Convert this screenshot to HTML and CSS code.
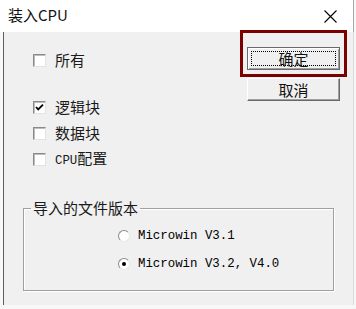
FILE: index.html
```html
<!DOCTYPE html>
<html lang="zh-CN">
<head>
    <meta charset="UTF-8">
    <title>装入CPU</title>
    <link rel="stylesheet" href="styles.css">
</head>
<body>
    <div class="dialog">
        <div class="title-bar">
            <span class="title">装入CPU</span>
            <svg class="close" width="13" height="13" viewBox="0 0 13 13">
                <path d="M0.5 0.5 L12.5 12.5 M12.5 0.5 L0.5 12.5" stroke="#000" stroke-width="1.1" fill="none"/>
            </svg>
        </div>
        <div class="dialog-body">
            <div class="top">
                <div class="checks">
                    <label class="check-row first">
                        <span class="box"></span>
                        <span class="label">所有</span>
                    </label>
                    <label class="check-row">
                        <span class="box">
                            <svg width="11" height="11" viewBox="0 0 11 11">
                                <path d="M2 5 L4.2 7.4 L9 2.6" stroke="#000" stroke-width="1.8" fill="none"/>
                            </svg>
                        </span>
                        <span class="label">逻辑块</span>
                    </label>
                    <label class="check-row">
                        <span class="box"></span>
                        <span class="label">数据块</span>
                    </label>
                    <label class="check-row">
                        <span class="box"></span>
                        <span class="label"><span class="mono">CPU</span>配置</span>
                    </label>
                </div>
                <div class="buttons">
                    <button class="btn default"><span class="focus">确定</span></button>
                    <button class="btn">取消</button>
                </div>
            </div>
            <fieldset class="group">
                <legend>导入的文件版本</legend>
                <label class="radio-row">
                    <span class="radio"></span>
                    <span class="mono">Microwin V3.1</span>
                </label>
                <label class="radio-row">
                    <span class="radio checked"></span>
                    <span class="mono">Microwin V3.2, V4.0</span>
                </label>
            </fieldset>
        </div>
    </div>
    <div class="highlight"></div>
</body>
</html>
```

FILE: styles.css
```css
body {
    margin: 0;
    background-color: #f7f7f7;
    font-family: "Noto Sans CJK SC", "Liberation Sans", sans-serif;
    font-size: 15px;
    color: #000;
    width: 356px;
    height: 309px;
    overflow: hidden;
    position: relative;
}
.dialog {
    width: 354px;
}
.title-bar {
    height: 32px;
    background-color: #fff;
    border-right: 1px solid #a8a8a8;
    display: flex;
    align-items: center;
    justify-content: space-between;
    padding: 0 16px 0 8px;
    box-sizing: border-box;
}
.title {
    font-size: 15px;
    line-height: 20px;
    margin-top: -2px;
    color: #111;
}
.close {
    display: block;
}
.dialog-body {
    margin-left: 3px;
    height: 273px;
    background-color: #f0f0f0;
    border-left: 1px solid #5f5f5f;
    border-right: 1px solid #d9d9d9;
    box-sizing: border-box;
}
.top {
    display: flex;
    justify-content: space-between;
}
.checks {
    padding: 15px 0 0 29px;
    display: flex;
    flex-direction: column;
}
.check-row {
    height: 26px;
    display: flex;
    align-items: center;
}
.check-row.first {
    margin-bottom: 21px;
}
.box {
    width: 13px;
    height: 13px;
    box-sizing: border-box;
    background-color: #fff;
    border: 1px solid;
    border-color: #8a8a8a #e3e3e3 #e3e3e3 #8a8a8a;
    box-shadow: inset 1px 1px #bdbdbd;
    display: flex;
    align-items: center;
    justify-content: center;
}
.box svg {
    display: block;
}
.label {
    margin-left: 9px;
    line-height: 20px;
    color: #1a1a1a;
}
.mono {
    font-family: "Liberation Mono", monospace;
    font-size: 12.4px;
}
.buttons {
    margin: 15px 13px 0 0;
    display: flex;
    flex-direction: column;
    gap: 8px;
}
.btn {
    width: 93px;
    height: 23px;
    padding: 0;
    font-family: inherit;
    font-size: 15px;
    color: #111;
    background-color: #f0f0f0;
    border: 1px solid;
    border-color: #fff #696969 #696969 #fff;
    box-shadow: inset -1px -1px #a0a0a0;
    display: flex;
    align-items: center;
    justify-content: center;
    box-sizing: border-box;
}
.btn.default {
    border-color: #6a6a6a;
    box-shadow: inset 1px 1px #fff, inset -1px -1px #a0a0a0;
    padding: 3px;
}
.focus {
    flex: 1;
    align-self: stretch;
    border: 1px dotted #000;
    display: flex;
    align-items: center;
    justify-content: center;
}
.group {
    margin: 26px 0 0 19px;
    width: 311px;
    box-sizing: border-box;
    border: 1px solid #a0a0a0;
    box-shadow: inset 1px 1px #fff, 1px 1px #fff;
    padding: 4px 0 12px 0;
}
.group legend {
    margin-left: 7px;
    padding: 0 2px;
    line-height: 20px;
    color: #1a1a1a;
}
.radio-row {
    height: 28px;
    padding-left: 94px;
    display: flex;
    align-items: center;
    gap: 8px;
}
.radio {
    width: 12px;
    height: 12px;
    border-radius: 50%;
    box-sizing: border-box;
    background-color: #fff;
    border: 1px solid;
    border-color: #8a8a8a #e8e8e8 #e8e8e8 #8a8a8a;
    position: relative;
}
.radio.checked::after {
    content: "";
    position: absolute;
    left: 3px;
    top: 3px;
    width: 4px;
    height: 4px;
    border-radius: 50%;
    background-color: #000;
}
.highlight {
    position: absolute;
    left: 240px;
    top: 30px;
    width: 107px;
    height: 47px;
    box-sizing: border-box;
    border: 3px solid #7d0000;
}
```
